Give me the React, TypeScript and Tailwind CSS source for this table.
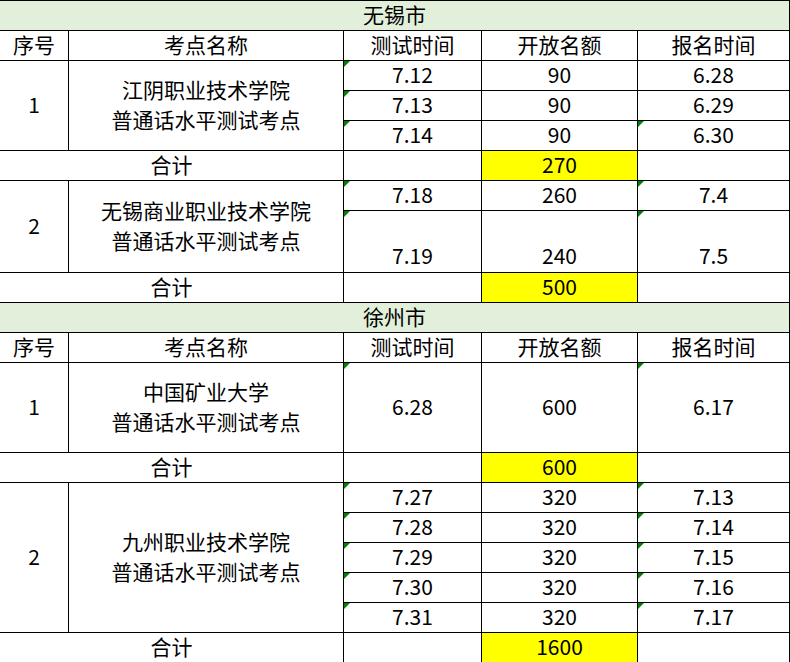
import type { ReactNode } from "react";

type CellProps = {
  children?: ReactNode;
  className?: string;
  bg?: string;
  tri?: boolean;
  bottom?: boolean;
};

// 单元格：默认居中，tri 表示左上角的绿色小三角（文本格式数字）
function Cell({ children, className = "", bg = "bg-white", tri, bottom }: CellProps) {
  return (
    <div
      className={`relative flex justify-center text-center ${bg} ${
        bottom ? "items-end pb-[2px]" : "items-center pb-[4px]"
      } ${className}`}
    >
      {tri && (
        <span className="absolute left-0 top-0 h-[6px] w-[6px] bg-[#008000] [clip-path:polygon(0_0,100%_0,0_100%)]" />
      )}
      <span>{children}</span>
    </div>
  );
}

function Title({ text }: { text: string }) {
  return (
    <Cell className="col-span-5" bg="bg-[#e2efda]">
      {text}
    </Cell>
  );
}

function Header() {
  return (
    <>
      <Cell>序号</Cell>
      <Cell>考点名称</Cell>
      <Cell>测试时间</Cell>
      <Cell>开放名额</Cell>
      <Cell>报名时间</Cell>
    </>
  );
}

function Total({ value }: { value: string }) {
  return (
    <>
      <Cell className="col-span-2">合计</Cell>
      <Cell />
      <Cell bg="bg-[#ffff00]">{value}</Cell>
      <Cell />
    </>
  );
}

function Site({ name }: { name: string }) {
  return (
    <>
      {name}
      <br />
      普通话水平测试考点
    </>
  );
}

export default function App() {
  return (
    <div className="w-[790px] bg-white">
      <div className="grid grid-cols-[68px_274px_137px_155px_151px] grid-rows-[29px_29px_29px_29px_29px_29px_29px_61px_29px_29px_29px_89px_29px_29px_29px_29px_29px_29px_29px] gap-px bg-black pt-px pr-px pb-px font-['Noto_Sans_CJK_SC',sans-serif] text-[21px] leading-[30px] text-black">
        <Title text="无锡市" />
        <Header />

        <Cell className="row-span-3">1</Cell>
        <Cell className="row-span-3">
          <Site name="江阴职业技术学院" />
        </Cell>
        <Cell tri>7.12</Cell>
        <Cell>90</Cell>
        <Cell>6.28</Cell>
        <Cell tri>7.13</Cell>
        <Cell>90</Cell>
        <Cell>6.29</Cell>
        <Cell tri>7.14</Cell>
        <Cell>90</Cell>
        <Cell tri>6.30</Cell>
        <Total value="270" />

        <Cell className="row-span-2">2</Cell>
        <Cell className="row-span-2">
          <Site name="无锡商业职业技术学院" />
        </Cell>
        <Cell tri>7.18</Cell>
        <Cell>260</Cell>
        <Cell tri>7.4</Cell>
        <Cell tri bottom>
          7.19
        </Cell>
        <Cell bottom>240</Cell>
        <Cell tri bottom>
          7.5
        </Cell>
        <Total value="500" />

        <Title text="徐州市" />
        <Header />

        <Cell>1</Cell>
        <Cell>
          <Site name="中国矿业大学" />
        </Cell>
        <Cell tri>6.28</Cell>
        <Cell>600</Cell>
        <Cell tri>6.17</Cell>
        <Total value="600" />

        <Cell className="row-span-5">2</Cell>
        <Cell className="row-span-5">
          <Site name="九州职业技术学院" />
        </Cell>
        {[
          ["7.27", "7.13"],
          ["7.28", "7.14"],
          ["7.29", "7.15"],
          ["7.30", "7.16"],
          ["7.31", "7.17"],
        ].map(([test, reg]) => (
          <div key={test} className="contents">
            <Cell tri>{test}</Cell>
            <Cell>320</Cell>
            <Cell tri>{reg}</Cell>
          </div>
        ))}
        <Total value="1600" />
      </div>
    </div>
  );
}
